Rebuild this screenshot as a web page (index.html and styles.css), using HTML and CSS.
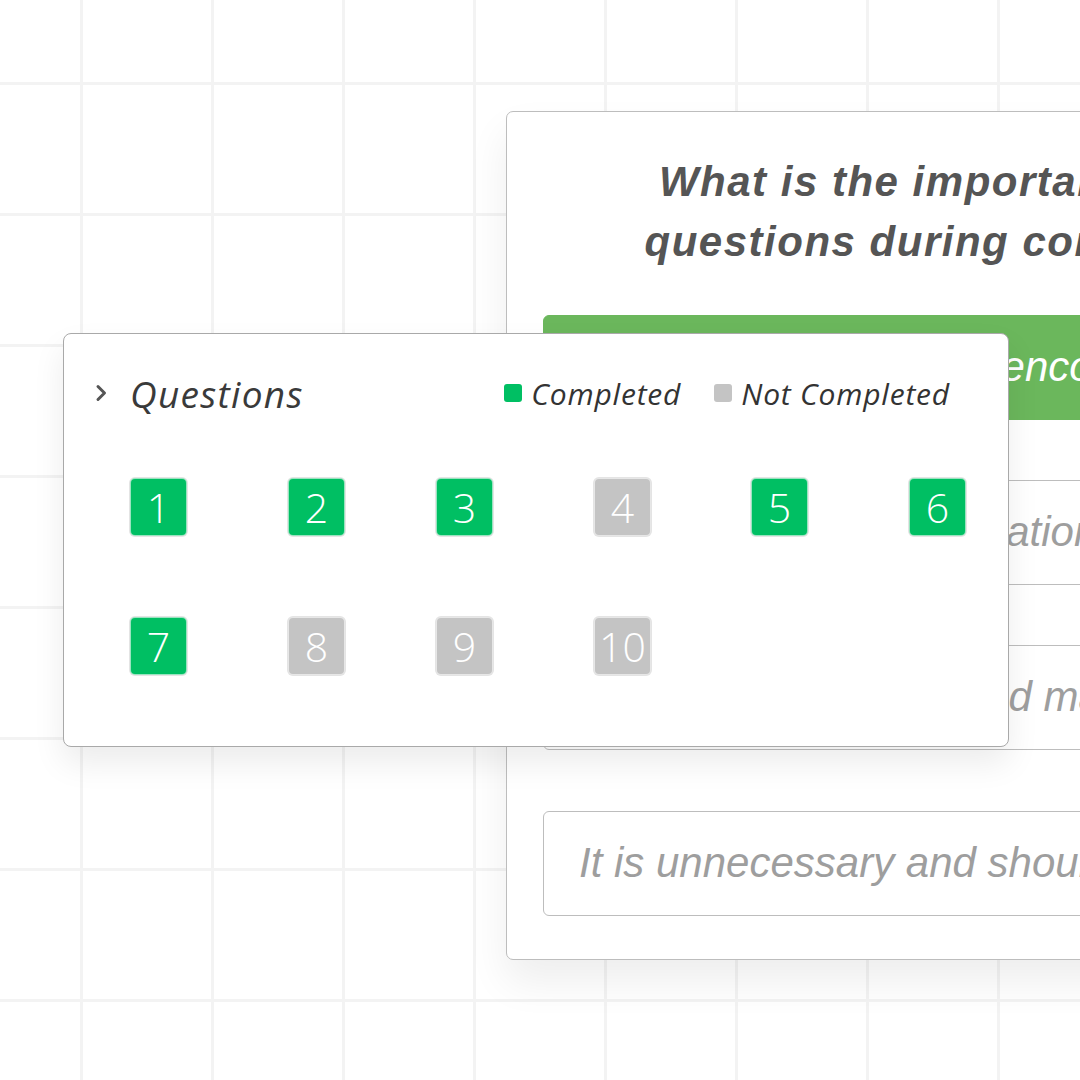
FILE: index.html
```html
<!DOCTYPE html>
<html lang="en">
<head>
    <meta charset="UTF-8">
    <meta name="viewport" content="width=device-width, initial-scale=1.0">
    <title>Quiz - Questions</title>
    <link rel="stylesheet" href="styles.css">
</head>
<body>

    <div class="quiz-card">
        <h2 class="question">What is the importance of asking<br>questions during communication?</h2>

        <div class="answer selected">It helps build trust and encourages open communication</div>
        <div class="answer">It gathers useful information</div>
        <div class="answer">It is a waste of time, and makes the patient uneasy</div>
        <div class="answer">It is unnecessary and should be avoided</div>
    </div>

    <!-- panel de navegacion de preguntas -->
    <div class="questions-panel">
        <div class="panel-header">
            <span class="chevron">
                <svg width="12" height="18" viewBox="0 0 12 18">
                    <path d="M3 2.5 L9.5 9 L3 15.5" fill="none" stroke="#555" stroke-width="3" stroke-linecap="round" stroke-linejoin="round"/>
                </svg>
            </span>
            <span class="panel-title">Questions</span>
            <div class="legend">
                <span class="legend-item"><i class="dot done"></i>Completed</span>
                <span class="legend-item"><i class="dot todo"></i>Not Completed</span>
            </div>
        </div>

        <div class="tiles">
            <span class="tile done">1</span>
            <span class="tile done">2</span>
            <span class="tile done">3</span>
            <span class="tile todo">4</span>
            <span class="tile done">5</span>
            <span class="tile done">6</span>
            <span class="tile done">7</span>
            <span class="tile todo">8</span>
            <span class="tile todo">9</span>
            <span class="tile todo">10</span>
        </div>
    </div>

</body>
</html>
```

FILE: styles.css
```css
* {
    margin: 0;
    padding: 0;
    box-sizing: border-box;
}

html, body {
    width: 1080px;
    height: 1080px;
    overflow: hidden;
}

body {
    position: relative;
    font-family: "Liberation Sans", Arial, sans-serif;
    background-color: #ffffff;
    background-image:
        linear-gradient(to right, #f3f3f3 3px, transparent 3px),
        linear-gradient(to bottom, #f3f3f3 3px, transparent 3px);
    background-size: 131px 131px;
    background-position: 80px 82px;
    padding: 111px 0 0 506px;
}

/* tarjeta de la pregunta (fondo) */
.quiz-card {
    width: 1012px;
    background: #fff;
    border: 1px solid #bdbdbd;
    border-radius: 7px;
    padding: 40px 36px 43px 36px;
    box-shadow: 0 22px 40px rgba(0, 0, 0, 0.07);
    display: flex;
    flex-direction: column;
    gap: 60px;
}

.question {
    font-size: 42px;
    font-weight: bold;
    font-style: italic;
    line-height: 60px;
    letter-spacing: 1.5px;
    color: #555;
    text-align: center;
    margin-bottom: -17px;
}

.answer {
    height: 105px;
    display: flex;
    align-items: center;
    padding: 0 35px;
    border: 1px solid #bdbdbd;
    border-radius: 6px;
    font-size: 42px;
    font-style: italic;
    line-height: 1.15;
    color: #9e9e9e;
    white-space: nowrap;
    overflow: hidden;
}

.answer:last-child {
    margin-top: 1px;
}

.answer.selected {
    background-color: #6bb75c;
    border-color: #6bb75c;
    color: #fff;
}

/* panel flotante */
.questions-panel {
    position: absolute;
    left: 63px;
    top: 333px;
    width: 946px;
    height: 414px;
    background: #fff;
    border: 1px solid #a9a9a9;
    border-radius: 8px;
    box-shadow: 0 16px 32px rgba(0, 0, 0, 0.08);
    padding: 29px 58px 0 31px;
    font-family: "Open Sans", sans-serif;
    color: #333;
}

.panel-header {
    display: flex;
    align-items: center;
    height: 60px;
}

.chevron {
    display: flex;
    width: 35px;
}

.panel-title {
    font-size: 37px;
    font-style: italic;
    letter-spacing: 1.3px;
    color: #3a3a3a;
}

.legend {
    margin-left: auto;
    display: flex;
    gap: 33px;
}

.legend-item {
    display: flex;
    align-items: center;
    gap: 9px;
    font-size: 30px;
    font-style: italic;
    letter-spacing: 0.8px;
    color: #333;
}

.dot {
    width: 18px;
    height: 18px;
    border-radius: 3px;
}

.done {
    background-color: #00bf63;
}

.todo {
    background-color: #c4c4c4;
}

.tiles {
    display: grid;
    grid-template-columns: 158px 148px 158px 157px 158px 58px;
    grid-auto-rows: 58px;
    row-gap: 81px;
    margin: 55px 0 0 35px;
}

.tile {
    width: 57px;
    height: 58px;
    border-radius: 5px;
    border: 1px solid rgba(255, 255, 255, 0.6);
    box-shadow: 0 0 0 1px #e4e4e4;
    display: flex;
    align-items: center;
    justify-content: center;
    color: #fff;
    font-size: 41px;
    font-weight: 300;
}
```
